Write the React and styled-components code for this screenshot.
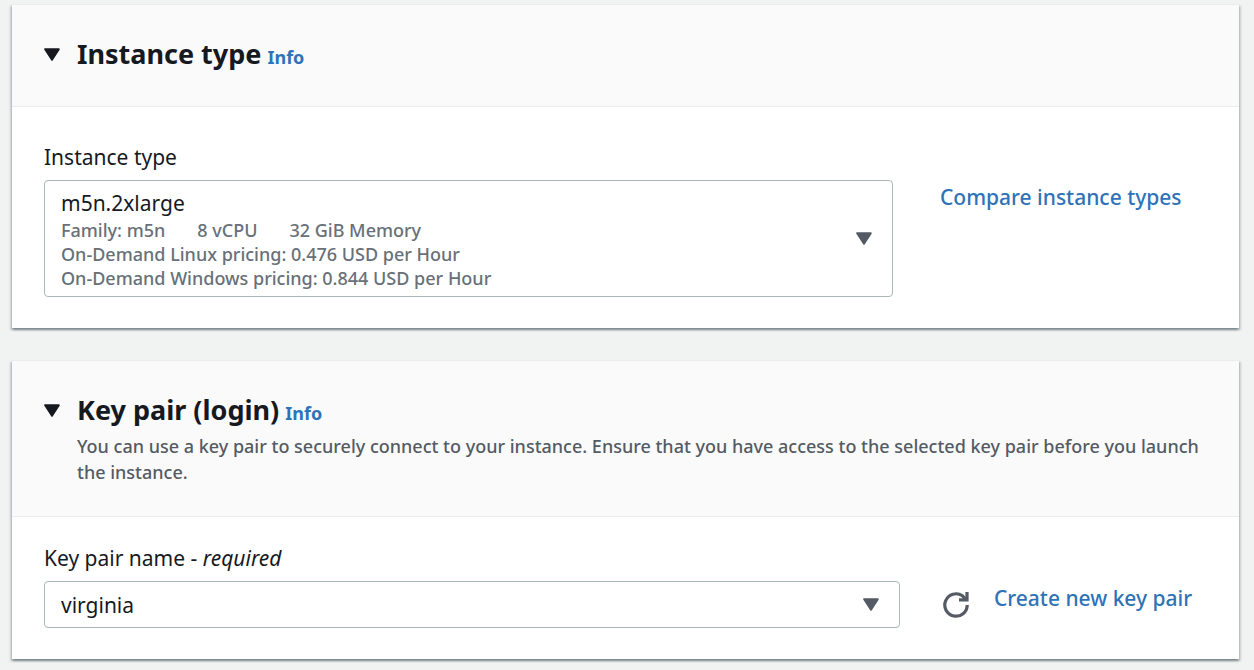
import React, { useState } from "react";
import styled, { createGlobalStyle } from "styled-components";

const GlobalStyle = createGlobalStyle`
  * { box-sizing: border-box; }
  body {
    margin: 0;
    background: #f1f3f3;
    color: #16191f;
    font-family: "Noto Sans", "Open Sans", sans-serif;
    font-size: 21px;
    line-height: 30px;
  }
  button, select { font: inherit; color: inherit; }
`;

const Page = styled.main`
  display: flex;
  flex-direction: column;
  gap: 32px;
  padding: 4px 15px 11px 12px;
`;

const Panel = styled.section`
  background: #ffffff;
  border-top: 1px solid #eaeded;
  box-shadow:
    0 2px 2px 0 rgba(0, 28, 36, 0.3),
    2px 2px 2px 0 rgba(0, 28, 36, 0.15),
    -2px 2px 2px 0 rgba(0, 28, 36, 0.15);
`;

const PanelHeader = styled.header`
  display: flex;
  align-items: flex-start;
  gap: 17px;
  padding: 29px 32px 31px;
  background: #fafafa;
  border-bottom: 1px solid #eaeded;
`;

const ToggleButton = styled.button`
  display: flex;
  align-items: center;
  height: 41px;
  padding: 0;
  border: 0;
  background: none;
  cursor: pointer;
`;

const TitleRow = styled.div`
  display: flex;
  align-items: baseline;
  gap: 6px;
`;

const Title = styled.h2`
  margin: 0;
  font-size: 27px;
  line-height: 39px;
  font-weight: 700;
`;

const Link = styled.a`
  color: #2e73b8;
  text-decoration: none;
  font-weight: 500;
  &:hover { text-decoration: underline; }
`;

const InfoLink = styled(Link)`
  font-size: 18px;
  font-weight: 700;
`;

const Description = styled.p`
  margin: 4px 0 0;
  color: #545b64;
  font-size: 18px;
  line-height: 26px;
  font-weight: 500;
`;

const PanelBody = styled.div`
  padding: ${(p) => p.$top}px 32px 31px;
`;

const Label = styled.label`
  display: block;
  width: fit-content;
  margin-bottom: 8px;
`;

const FieldRow = styled.div`
  display: flex;
  align-items: flex-start;
  gap: ${(p) => p.$gap}px;
`;

const Aside = styled.div`
  display: flex;
  align-items: flex-start;
  gap: 25px;
  flex: 0 0 ${(p) => p.$width}px;
  padding-top: 2px;
`;

const InstanceButton = styled.button`
  display: flex;
  align-items: center;
  justify-content: space-between;
  flex: 1;
  min-width: 0;
  padding: 7px 20px 6px 16px;
  border: 1px solid #aab7b8;
  border-radius: 4px;
  background: #ffffff;
  text-align: left;
  cursor: pointer;
`;

const OptionName = styled.span`
  display: block;
`;

const OptionLine = styled.span`
  display: flex;
  gap: 32px;
  color: #687078;
  font-size: 18px;
  line-height: 24px;
  font-weight: 500;
`;

const SelectBox = styled.div`
  position: relative;
  display: flex;
  align-items: center;
  flex: 1;
  min-width: 0;
`;

const Select = styled.select`
  appearance: none;
  width: 100%;
  height: 47px;
  padding: 0 52px 0 16px;
  border: 1px solid #aab7b8;
  border-radius: 4px;
  background: #ffffff;
  cursor: pointer;
`;

const SelectCaret = styled.span`
  position: absolute;
  right: 21px;
  display: flex;
  pointer-events: none;
`;

const IconButton = styled.button`
  display: flex;
  padding: 9px 0 0;
  border: 0;
  background: none;
  cursor: pointer;
`;

function Caret({ color }) {
  return (
    <svg width="16" height="14" viewBox="0 0 16 14" aria-hidden="true">
      <path
        d="M1.2 1.2H14.8L8 11.8Z"
        fill={color}
        stroke={color}
        strokeWidth="2"
        strokeLinejoin="round"
      />
    </svg>
  );
}

function RefreshIcon() {
  return (
    <svg width="26" height="26" viewBox="0 0 26 26" fill="none" stroke="#545b64" strokeWidth="3.2" aria-hidden="true">
      <path d="M24.2 13A11.2 11.2 0 1 1 19.4 3.8L22.6 7.4" />
      <path d="M24 0V7.8H16" />
    </svg>
  );
}

function Section({ title, description, bodyTop, children }) {
  const [open, setOpen] = useState(true);
  return (
    <Panel>
      <PanelHeader>
        <ToggleButton
          type="button"
          aria-label={title}
          aria-expanded={open}
          onClick={() => setOpen(!open)}
        >
          <Caret color="#16191f" />
        </ToggleButton>
        <div>
          <TitleRow>
            <Title>{title}</Title>
            <InfoLink href="#info">Info</InfoLink>
          </TitleRow>
          {description && <Description>{description}</Description>}
        </div>
      </PanelHeader>
      {open && <PanelBody $top={bodyTop}>{children}</PanelBody>}
    </Panel>
  );
}

export default function App() {
  return (
    <>
      <GlobalStyle />
      <Page>
        <Section title="Instance type" bodyTop={35}>
          <Label htmlFor="instance-type">Instance type</Label>
          <FieldRow $gap={47}>
            <InstanceButton id="instance-type" type="button" aria-haspopup="listbox">
              <span>
                <OptionName>m5n.2xlarge</OptionName>
                <OptionLine>
                  <span>Family: m5n</span>
                  <span>8 vCPU</span>
                  <span>32 GiB Memory</span>
                </OptionLine>
                <OptionLine>On-Demand Linux pricing: 0.476 USD per Hour</OptionLine>
                <OptionLine>On-Demand Windows pricing: 0.844 USD per Hour</OptionLine>
              </span>
              <Caret color="#545b64" />
            </InstanceButton>
            <Aside $width={267}>
              <Link href="#compare">Compare instance types</Link>
            </Aside>
          </FieldRow>
        </Section>

        <Section
          title="Key pair (login)"
          description="You can use a key pair to securely connect to your instance. Ensure that you have access to the selected key pair before you launch the instance."
          bodyTop={26}
        >
          <Label htmlFor="key-pair">
            Key pair name - <em>required</em>
          </Label>
          <FieldRow $gap={43}>
            <SelectBox>
              <Select id="key-pair" defaultValue="virginia">
                <option value="virginia">virginia</option>
              </Select>
              <SelectCaret>
                <Caret color="#545b64" />
              </SelectCaret>
            </SelectBox>
            <Aside $width={264}>
              <IconButton type="button" aria-label="Refresh key pairs">
                <RefreshIcon />
              </IconButton>
              <Link href="#create">Create new key pair</Link>
            </Aside>
          </FieldRow>
        </Section>
      </Page>
    </>
  );
}
